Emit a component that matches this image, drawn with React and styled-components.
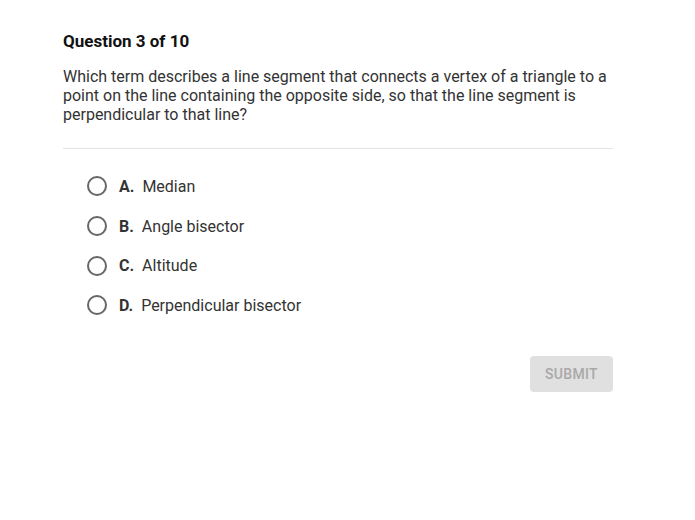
import styled, { createGlobalStyle } from "styled-components";

const GlobalStyle = createGlobalStyle`
  body {
    margin: 0;
    background: #fff;
    font-family: Roboto, "Liberation Sans", sans-serif;
  }
`;

const Container = styled.div`
  width: 550px;
  padding: 31px 0 0 63px;
`;

const Title = styled.h2`
  margin: 0;
  font-size: 17px;
  font-weight: 700;
  line-height: 21px;
  color: #111;
`;

const Prompt = styled.p`
  margin: 15px 0 0;
  font-size: 16px;
  line-height: 19px;
  color: #333;
`;

const Divider = styled.hr`
  margin: 24px 0 0;
  border: none;
  border-top: 1px solid #e2e2e2;
`;

const Options = styled.div`
  display: flex;
  flex-direction: column;
  gap: 19px;
  padding: 27px 0 0 24px;
`;

const Option = styled.label`
  display: flex;
  align-items: center;
  height: 20.7px;
  cursor: pointer;
`;

const Radio = styled.span`
  width: 16px;
  height: 16px;
  border: 2px solid #666;
  border-radius: 50%;
  margin-right: 12px;
  flex-shrink: 0;
`;

const Letter = styled.span`
  font-size: 16px;
  font-weight: 700;
  color: #333;
  margin-right: 8px;
`;

const Text = styled.span`
  font-size: 16px;
  color: #333;
`;

const Footer = styled.div`
  display: flex;
  justify-content: flex-end;
  padding-top: 40px;
`;

const Submit = styled.button`
  width: 83px;
  height: 36px;
  border: none;
  border-radius: 4px;
  background: #e0e0e0;
  color: #a8a8a8;
  font-family: Roboto, "Liberation Sans", sans-serif;
  font-size: 14px;
  font-weight: 500;
  letter-spacing: 0.3px;
`;

const answers = [
  ["A.", "Median"],
  ["B.", "Angle bisector"],
  ["C.", "Altitude"],
  ["D.", "Perpendicular bisector"],
];

const App = () => {
  return (
    <>
      <GlobalStyle />
      <Container>
        <Title>Question 3 of 10</Title>
        <Prompt>
          Which term describes a line segment that connects a vertex of a triangle to a
          point on the line containing the opposite side, so that the line segment is
          perpendicular to that line?
        </Prompt>
        <Divider />
        <Options>
          {answers.map(([letter, text]) => (
            <Option key={letter}>
              <Radio />
              <Letter>{letter}</Letter>
              <Text>{text}</Text>
            </Option>
          ))}
        </Options>
        <Footer>
          <Submit disabled>SUBMIT</Submit>
        </Footer>
      </Container>
    </>
  );
};

export default App;
